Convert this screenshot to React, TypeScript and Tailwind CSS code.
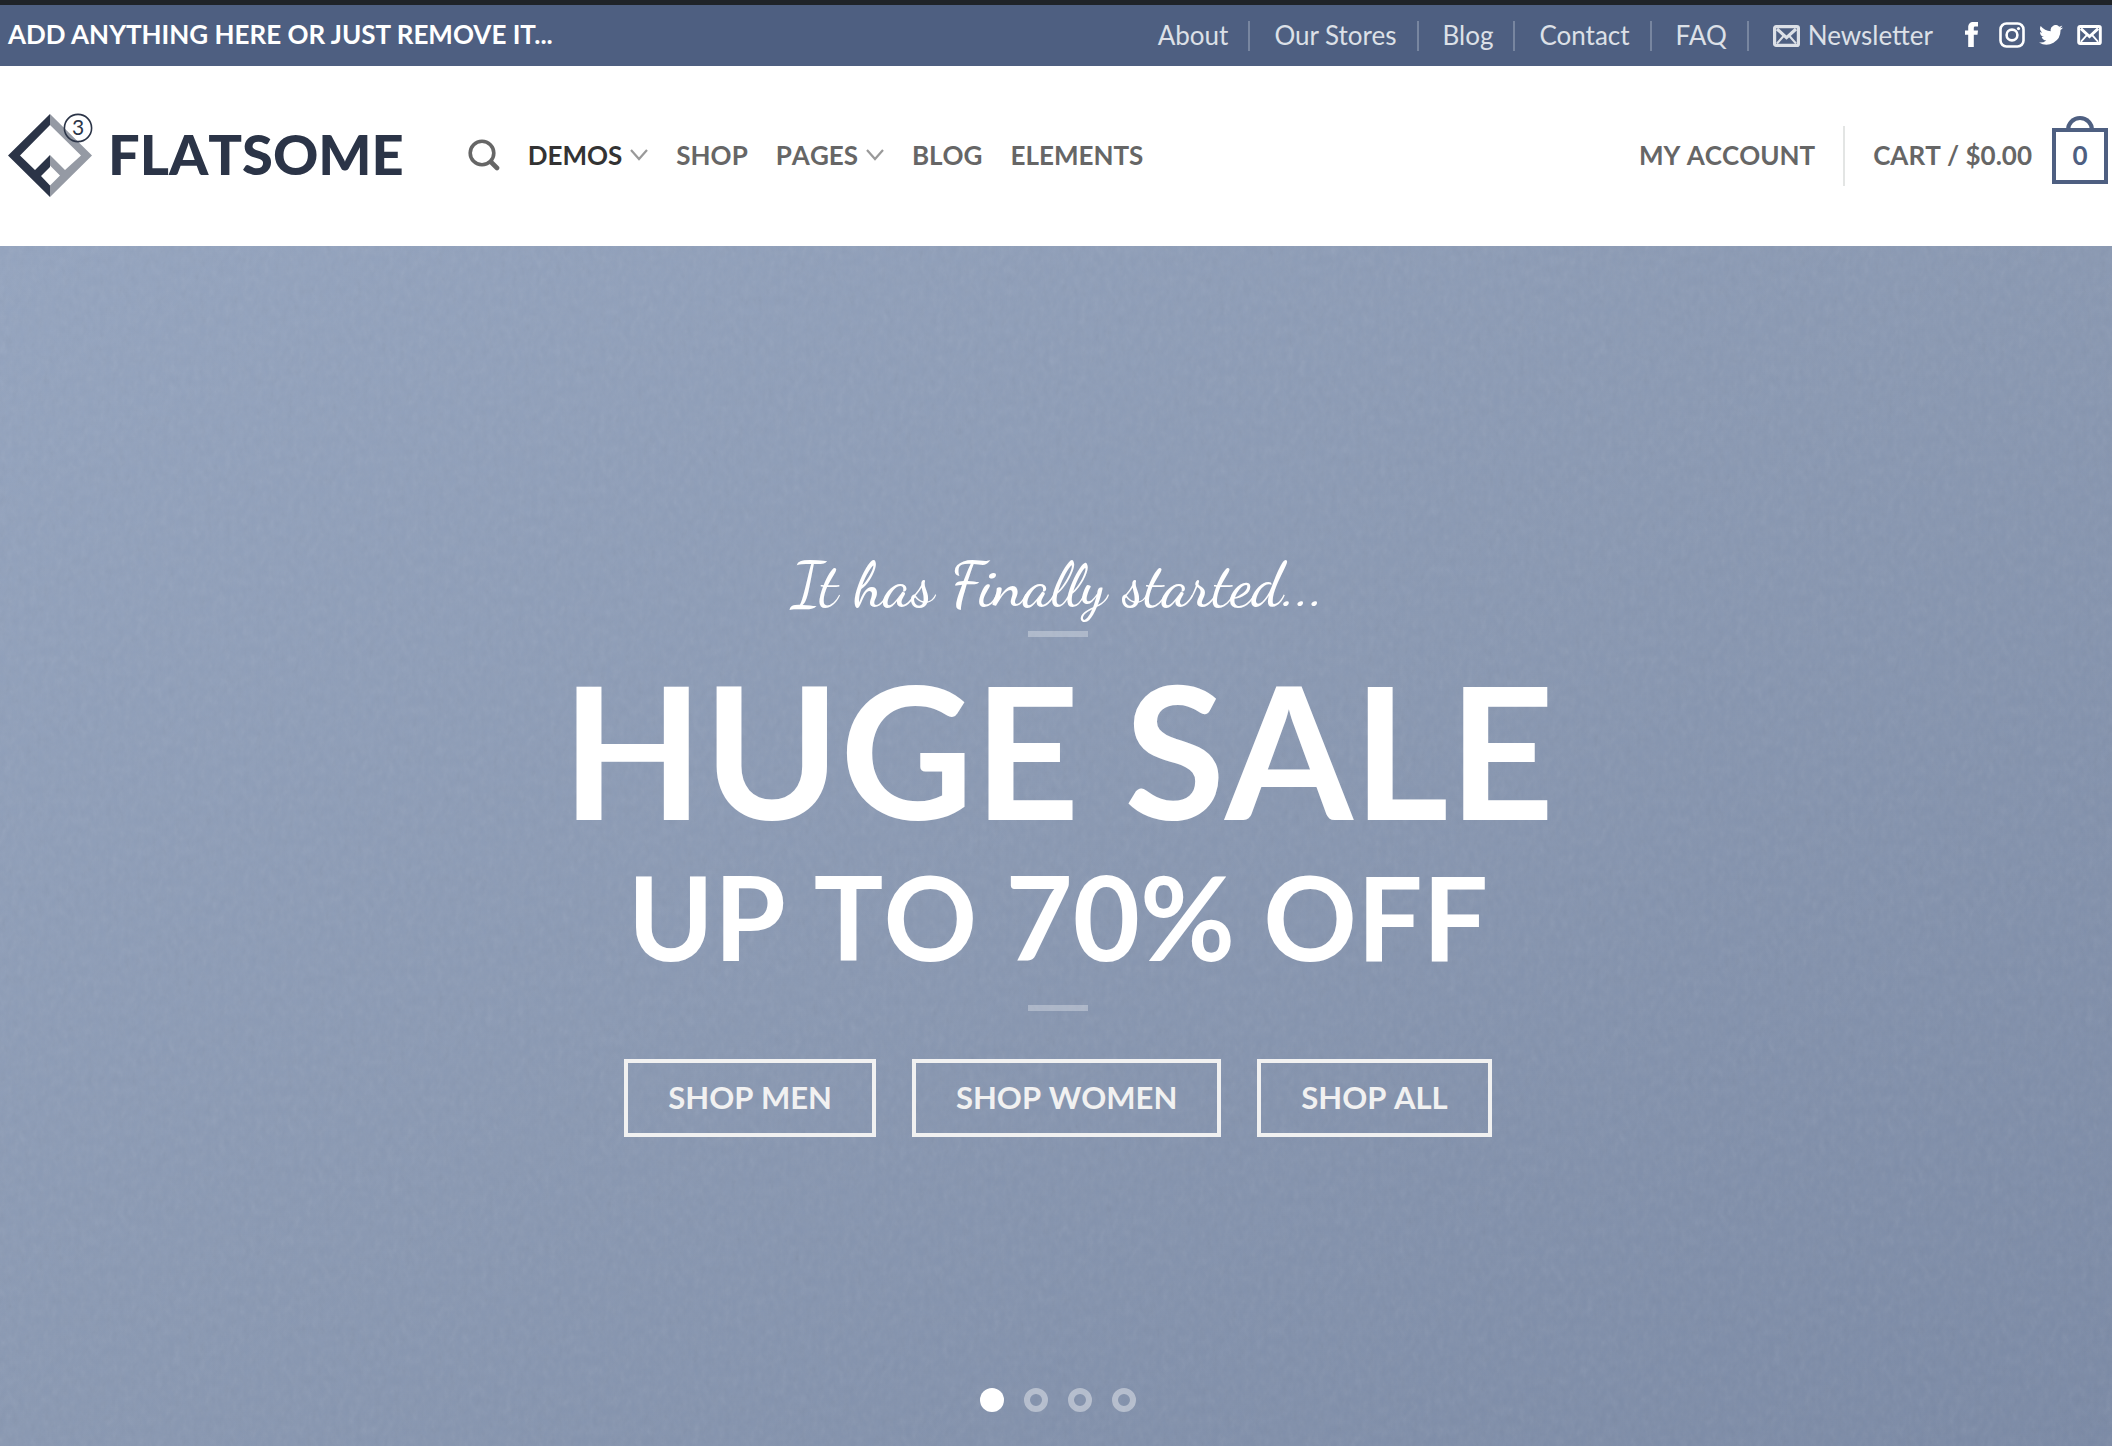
import type { ReactNode } from 'react';

const topLinks = ['About', 'Our Stores', 'Blog', 'Contact', 'FAQ'];

const slides = [1, 2, 3, 4];

const EnvelopeIcon = ({ className }: { className: string }) => (
  <svg viewBox="0 0 27 22" className={className} fill="none" stroke="currentColor" aria-hidden="true">
    <rect x="1.6" y="1.6" width="23.8" height="18.8" rx="1.5" strokeWidth="3.2" />
    <path d="M4 4 L13.5 12.6 L23 4" strokeWidth="3.2" />
    <path d="M4 18.5 L11 10.5 M23 18.5 L16 10.5" strokeWidth="2" />
  </svg>
);

const FacebookIcon = () => (
  <svg viewBox="0 0 13 25" className="h-[25px] w-[13px]" fill="currentColor" aria-hidden="true">
    <path d="M3.2 25V12.8H0V8.4h3.2V5.6C3.2 2 5 0 8.4 0H13v4.4h-2.7c-1.2 0-1.5.6-1.5 1.6v2.4H13l-.5 4.4H8.8V25z" />
  </svg>
);

const InstagramIcon = () => (
  <svg viewBox="0 0 26 26" className="size-[26px]" fill="none" stroke="currentColor" aria-hidden="true">
    <rect x="1.5" y="1.5" width="23" height="23" rx="6" strokeWidth="2.6" />
    <circle cx="13" cy="13" r="5.4" strokeWidth="2.6" />
    <circle cx="19.5" cy="6.6" r="1.6" fill="currentColor" stroke="none" />
  </svg>
);

const TwitterIcon = () => (
  <svg viewBox="0 0 24 20" className="h-5 w-6" fill="currentColor" aria-hidden="true">
    <path d="M24 2.4a9.8 9.8 0 0 1-2.8.8A4.9 4.9 0 0 0 23.3.5a9.9 9.9 0 0 1-3.1 1.2 4.9 4.9 0 0 0-8.4 4.5A14 14 0 0 1 1.7 1a4.9 4.9 0 0 0 1.5 6.6A4.9 4.9 0 0 1 1 7v.1a4.9 4.9 0 0 0 3.9 4.8 5 5 0 0 1-2.2.1 4.9 4.9 0 0 0 4.6 3.4A9.9 9.9 0 0 1 0 17.5a14 14 0 0 0 21.5-12.4A10 10 0 0 0 24 2.4z" />
  </svg>
);

const SearchIcon = () => (
  <svg viewBox="0 0 32 32" className="size-8" fill="none" stroke="currentColor" aria-hidden="true">
    <circle cx="14" cy="14" r="11.8" strokeWidth="3.6" />
    <path d="M23 23 L29 29" strokeWidth="4.6" strokeLinecap="round" />
  </svg>
);

const ChevronIcon = () => (
  <svg viewBox="0 0 18 12" className="h-3 w-[18px] text-[#999]" fill="none" stroke="currentColor" aria-hidden="true">
    <path d="M1 1 L9 10 L17 1" strokeWidth="2.2" />
  </svg>
);

const Logo = () => (
  <a href="#home" aria-label="Flatsome" className="flex items-center gap-3.5 text-[#2b3447]">
    <svg viewBox="0 0 86 86" className="size-[86px]" aria-hidden="true">
      <path d="M42 1 L84 42.5 L42 84 V72.5 L52 62.5 L42 52.5 V42 L57 57 L73 42.5 L42 12 Z" fill="#959aa4" />
      <path d="M42 1 L0 42.5 L42 84 V72.5 L33 63 L42 54 V42 L27 57 L12 42.5 L42 12 Z" fill="currentColor" />
      <circle cx="70" cy="15" r="13.6" fill="none" stroke="currentColor" strokeWidth="1.6" />
      <text x="70" y="22" textAnchor="middle" fontSize="21" fontWeight="400" fill="currentColor">3</text>
    </svg>
    <span className="pb-1 text-[56px] leading-none font-black">FLATSOME</span>
  </a>
);

const NavLink = ({ children, active = false }: { children: ReactNode; active?: boolean }) => (
  <a
    href="#nav"
    className={active ? 'flex items-center gap-2 text-[#333]' : 'flex items-center gap-2 text-[#666]'}
  >
    {children}
  </a>
);

const TopBar = () => (
  <div className="flex h-[61px] items-center justify-between bg-[#4e5f81] px-2 text-white [font-kerning:normal]">
    <strong className="pb-0.5 text-[26px] font-bold">ADD ANYTHING HERE OR JUST REMOVE IT...</strong>
    <div className="flex items-center">
      <nav className="flex items-center text-[26px] text-[#dce0e7]">
        {topLinks.map((label) => (
          <div key={label} className="flex items-center">
            <a href="#top">{label}</a>
            <span className="mr-6 ml-5 h-[30px] w-0.5 bg-[#7886a0]" />
          </div>
        ))}
        <a href="#newsletter" className="flex items-center gap-2">
          <EnvelopeIcon className="h-[22px] w-[27px]" />
          Newsletter
        </a>
      </nav>
      <div className="mr-0.5 ml-8 flex items-center gap-3.5 pb-0.5">
        <a href="#facebook" aria-label="Facebook" className="flex w-5"><FacebookIcon /></a>
        <a href="#instagram" aria-label="Instagram"><InstagramIcon /></a>
        <a href="#twitter" aria-label="Twitter"><TwitterIcon /></a>
        <a href="#email" aria-label="Email"><EnvelopeIcon className="h-5 w-[25px]" /></a>
      </div>
    </div>
  </div>
);

const Header = () => (
  <header className="flex h-[180px] items-center justify-between bg-white pr-1 pl-2 text-[26px] font-bold text-[#666]">
    <div className="flex items-center gap-16">
      <Logo />
      <nav className="flex items-center gap-7 pb-0.5">
        <button type="button" aria-label="Search"><SearchIcon /></button>
        <NavLink active>DEMOS <ChevronIcon /></NavLink>
        <NavLink>SHOP</NavLink>
        <NavLink>PAGES <ChevronIcon /></NavLink>
        <NavLink>BLOG</NavLink>
        <NavLink>ELEMENTS</NavLink>
      </nav>
    </div>
    <div className="flex items-center">
      <a href="#account" className="pb-0.5">MY ACCOUNT</a>
      <span className="mx-7 h-[60px] w-0.5 bg-[#e3e5e4]" />
      <a href="#cart" className="flex items-center gap-5">
        <span className="pb-0.5">CART / $0.00</span>
        <span className="relative flex size-14 items-center justify-center border-4 border-[#4e5f81] pb-0.5 text-[#4e5f81]">
          <span className="absolute -top-4 left-2.5 h-4 w-7 rounded-t-full border-4 border-b-0 border-[#4e5f81]" />
          0
        </span>
      </a>
    </div>
  </header>
);

const Divider = () => <div className="h-1.5 w-[60px] bg-white/30" />;

const ShopButton = ({ children }: { children: ReactNode }) => (
  <button type="button" className="h-[78px] border-4 border-[#f1f1f1] px-10 pb-0.5 text-[31px] leading-none font-bold text-[#f1f1f1]">
    {children}
  </button>
);

const Hero = () => (
  <section className="relative flex h-[1200px] flex-col items-center bg-linear-to-br from-[#94a4bf] via-[#8998b2] to-[#7a89a5] pl-1 text-white">
    {/* woven cloth grain */}
    <svg className="absolute inset-0 h-full w-full opacity-10" aria-hidden="true">
      <filter id="cloth">
        <feTurbulence type="fractalNoise" baseFrequency="0.16 0.1" numOctaves="3" />
        <feColorMatrix type="saturate" values="0" />
      </filter>
      <rect width="100%" height="100%" filter="url(#cloth)" />
    </svg>
    <div className="relative flex flex-col items-center pt-[300px]">
      <p className="mb-1.5 font-['Dancing_Script',cursive] text-[63px] leading-[79px] font-medium [font-kerning:normal]">
        It has Finally started...
      </p>
      <Divider />
      <h1 className="mt-5 text-[184px] leading-[184px] font-bold">HUGE SALE</h1>
      <h2 className="mt-5 text-[116px] leading-[112px] font-bold">UP TO 70% OFF</h2>
      <div className="mt-8"><Divider /></div>
      <div className="mt-12 flex gap-9">
        <ShopButton>SHOP MEN</ShopButton>
        <ShopButton>SHOP WOMEN</ShopButton>
        <ShopButton>SHOP ALL</ShopButton>
      </div>
    </div>
    <div className="absolute bottom-[34px] flex gap-5">
      {slides.map((slide) => (
        <button
          key={slide}
          type="button"
          aria-label={`Slide ${slide}`}
          className={slide === 1 ? 'size-6 rounded-full bg-white' : 'size-6 rounded-full border-6 border-white/40'}
        />
      ))}
    </div>
  </section>
);

const App = () => (
  <div className="bg-white pb-[9px] font-[Lato,sans-serif] [font-kerning:none]">
    <div className="h-[5px] bg-[#1f2328]" />
    <TopBar />
    <Header />
    <Hero />
  </div>
);

export default App;
